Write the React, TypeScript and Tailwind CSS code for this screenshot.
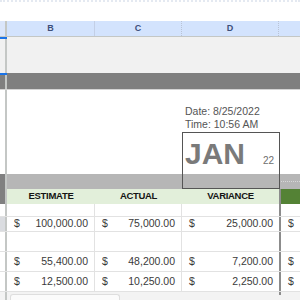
import React from "react";

function MoneyRow({ b, c, d, h, selected }: { b: string; c: string; d: string; h: string; selected?: boolean }) {
  return (
    <div className={`flex ${h} border-b border-[#e2e2e2] text-[10.5px] text-[#3a3a3a]`}>
      <div className={`w-[5px] ${selected ? "bg-[#dadce0]" : "bg-white"}`} />
      <div className="w-[2px] bg-[#c4c7c5]" />
      <div className="w-[88px] flex items-center justify-between pl-[7px] pr-[6px] border-r border-[#e2e2e2]">
        <span>$</span>
        <span>{b}</span>
      </div>
      <div className="w-[87px] flex items-center justify-between pl-[7px] pr-[6px] border-r border-[#e2e2e2]">
        <span>$</span>
        <span>{c}</span>
      </div>
      <div className="w-[97px] flex items-center justify-between pl-[7px] pr-[6px]">
        <span>$</span>
        <span>{d}</span>
      </div>
      <div className="w-[2px] bg-[#8c8c8c]" />
      <div className="flex-1 flex items-center pl-[7px]">
        <span>$</span>
      </div>
    </div>
  );
}

function EmptyRow({ h }: { h: string }) {
  return (
    <div className={`flex ${h} border-b border-[#e2e2e2]`}>
      <div className="w-[5px] bg-white" />
      <div className="w-[2px] bg-[#c4c7c5]" />
      <div className="w-[88px] border-r border-[#e2e2e2]" />
      <div className="w-[87px] border-r border-[#e2e2e2]" />
      <div className="w-[97px]" />
      <div className="w-[2px] bg-[#8c8c8c]" />
      <div className="flex-1" />
    </div>
  );
}

export default function App() {
  return (
    <div className="relative w-[300px] h-[300px] overflow-hidden bg-white font-['Liberation_Sans',Arial,sans-serif]">
      {/* top white strip */}
      <div className="h-[21px] border-t-2 border-dotted border-[#e4e9f1]" />

      {/* column letters */}
      <div className="flex h-[16px] bg-[#d3e3fd] border-b border-[#c4c7c5] text-[9px] font-bold text-[#3d4f7a]">
        <div className="w-[5px] bg-[#dbe6fb]" />
        <div className="w-[2px] bg-[#c4c7c5]" />
        <div className="w-[88px] flex items-center justify-center border-r border-[#c3cfe6]">B</div>
        <div className="w-[87px] flex items-center justify-center border-r border-dotted border-[#b9c3d6]">C</div>
        <div className="w-[97px] flex items-center justify-center border-r border-dotted border-[#b9c3d6]">D</div>
        <div className="flex-1" />
      </div>

      {/* row 1 light gray */}
      <div className="flex h-[36px] bg-[#f1f1f1]">
        <div className="w-[7px] flex flex-col">
          <div className="h-[2px] bg-[#1a73e8]" />
          <div className="flex-1 flex">
            <div className="w-[5px] bg-[#f1f1f1]" />
            <div className="w-[2px] bg-[#c4c7c5]" />
          </div>
        </div>
        <div className="flex-1" />
      </div>

      {/* dark band */}
      <div className="flex h-[16px] bg-[#7f7f7f]">
        <div className="w-[7px] flex flex-col">
          <div className="h-[2px] bg-[#1a73e8]" />
          <div className="flex-1 flex">
            <div className="w-[5px] bg-[#7f7f7f]" />
            <div className="w-[2px] bg-[#c4c7c5]" />
          </div>
        </div>
        <div className="flex-1" />
      </div>
      <div className="h-[1px] bg-[#d4d4d4]" />

      {/* white area with date/time */}
      <div className="flex h-[84px]">
        <div className="w-[5px] bg-white" />
        <div className="w-[2px] bg-[#c4c7c5]" />
        <div className="w-[88px]" />
        <div className="w-[87px]" />
        <div className="w-[97px] pl-[3px] pt-[15px] text-[10.5px] leading-[13px] text-[#555555]">
          <div>Date: 8/25/2022</div>
          <div>Time: 10:56 AM</div>
        </div>
        <div className="flex-1" />
      </div>

      {/* gray band */}
      <div className="flex h-[15px] bg-[#b6b6b6]">
        <div className="w-[5px] bg-[#808080]" />
        <div className="w-[2px] bg-[#c4c7c5]" />
        <div className="w-[272px]" />
        <div className="flex-1 flex items-center">
          <div className="w-full border-t border-dotted border-[#d8d8d8]" />
        </div>
      </div>

      {/* green header */}
      <div className="flex h-[15px] bg-[#e2efda] text-[9.5px] font-bold text-[#141414] tracking-[-0.3px]">
        <div className="w-[5px] bg-[#808080]" />
        <div className="w-[2px] bg-[#c4c7c5]" />
        <div className="w-[88px] flex items-center justify-center">ESTIMATE</div>
        <div className="w-[87px] flex items-center justify-center">ACTUAL</div>
        <div className="w-[97px] flex items-center justify-center">VARIANCE</div>
        <div className="w-[2px] bg-[#8c8c8c]" />
        <div className="flex-1 bg-[#548235]" />
      </div>

      <EmptyRow h="h-[13px]" />
      <MoneyRow h="h-[15px]" b="100,000.00" c="75,000.00" d="25,000.00" selected />
      <EmptyRow h="h-[20px]" />
      <MoneyRow h="h-[20px]" b="55,400.00" c="48,200.00" d="7,200.00" />
      <MoneyRow h="h-[20px]" b="12,500.00" c="10,250.00" d="2,250.00" />

      {/* bottom strip */}
      <div className="flex h-[8px] bg-[#f3f3f3]">
        <div className="w-[5px]" />
        <div className="w-[2px] bg-[#c4c7c5]" />
        <div className="w-[3px]" />
        <div className="w-[110px] mt-[2px] rounded-t-[3px] bg-[#fbfbfb] border border-b-0 border-[#dedede]" />
        <div className="w-[159px]" />
        <div className="w-[2px] h-[3px] bg-[#8c8c8c]" />
      </div>

      {/* JAN floating box */}
      <div className="absolute left-[182px] top-[132px] w-[98px] h-[57px] border border-[#555555] flex items-baseline justify-between pl-[2px] pr-[5px] pt-[6px] text-[#7a7a7a]">
        <span className="text-[30px] leading-[30px] font-bold">JAN</span>
        <span className="text-[10px] leading-[10px] text-[#6e6e6e]">22</span>
      </div>
    </div>
  );
}
